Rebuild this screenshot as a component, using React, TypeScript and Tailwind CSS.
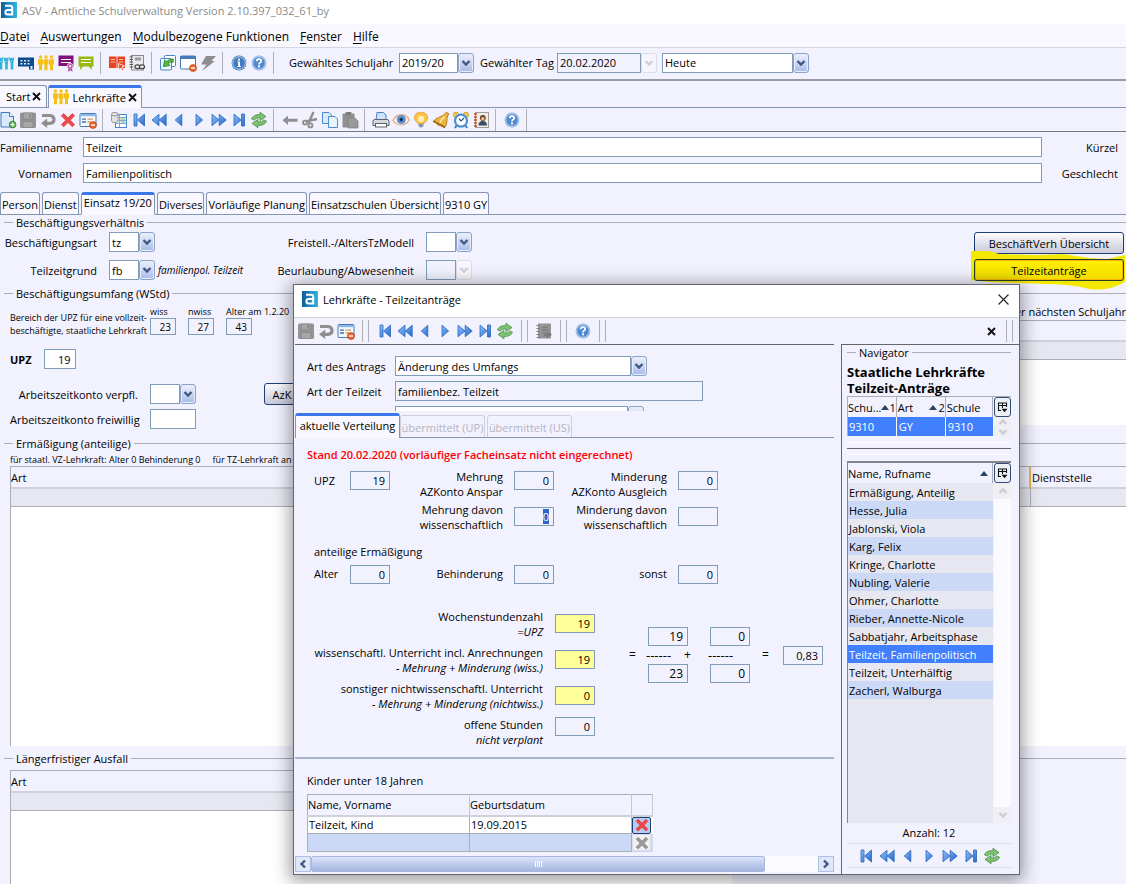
import type { ReactNode } from "react";

/* ---------- icons ---------- */

function Svg({ children, size = 18 }: { children: ReactNode; size?: number }) {
  return (
    <svg width={size} height={size} viewBox="0 0 18 18" aria-hidden="true" className="shrink-0">
      {children}
    </svg>
  );
}

const LogoIcon = () => (
  <Svg size={16}>
    <defs>
      <linearGradient id="logo" x1="0" x2="1">
        <stop offset="0" stopColor="#0f5c9c" />
        <stop offset="1" stopColor="#2fb4e6" />
      </linearGradient>
    </defs>
    <rect width="18" height="18" fill="url(#logo)" />
    <path d="M4.5 4.2 H10.5 Q12.6 4.2 12.6 6.5 V14 H7.5 Q5 14 5 11.5 Q5 9 7.5 9 H12.6" fill="none" stroke="#fff" strokeWidth="2.3" />
  </Svg>
);

const PeopleIcon = ({ color }: { color: string }) => (
  <Svg>
    <g fill={color}>
      {[3.5, 9, 14.5].map((x) => (
        <g key={x}>
          <circle cx={x} cy="3" r="1.7" />
          <path d={`M${x - 2.5} 5.2 h5 v5.4 h-1 v5.6 h-3 v-5.6 h-1 z`} />
        </g>
      ))}
    </g>
  </Svg>
);

const PupilsIcon = () => (
  <Svg>
    <g fill="#2fb2dc">
      {[3.5, 9, 14.5].map((x) => (
        <g key={x}>
          <circle cx={x} cy="5.4" r="1.6" />
          <path d={`M${x - 2.7} 3.5 h1.4 l.6 4 h1.4 l.6 -4 h1.4 l-.9 6.5 v5.5 h-2.6 v-5.5 z`} />
        </g>
      ))}
    </g>
  </Svg>
);

const SchoolIcon = () => (
  <Svg>
    <path d="M1 3.5 H17 V15.5 H12 V12.5 H1 Z" fill="#0b4a8c" />
    <path d="M3.5 6 h2 v1.5 h-2z M7 6 h2 v1.5 h-2z M10.5 6 h2 v1.5 h-2z M3.5 9 h2 v1.5 h-2z M7 9 h2 v1.5 h-2z M10.5 9 h2 v1.5 h-2z M13.5 12 h2 v3 h-2z" fill="#dfeaf6" />
  </Svg>
);

const BoardIcon = ({ color, badge }: { color: string; badge?: boolean }) => (
  <Svg>
    <path d={badge ? "M1.5 1.5 H16.5 V12 H1.5 Z" : "M1.5 2.5 H16.5 V12.5 H14.8 V16 L11.8 12.5 H6 L3.2 16 V12.5 H1.5 Z"} fill={color} />
    <path d="M4 5.5 H14 M4 8.5 H14" stroke="#fff" strokeWidth="1.1" />
    {badge && (
      <g fill="#b65aa6">
        <circle cx="13.2" cy="12.2" r="3" stroke="#fff" strokeWidth=".6" />
        <path d="M11.4 14.5 L10.8 17.8 L13.2 16.4 L15.6 17.8 L15 14.5z" />
        <circle cx="13.2" cy="12.2" r="1.1" fill="#fff" />
      </g>
    )}
  </Svg>
);

const BookIcon = () => (
  <Svg>
    <path d="M1 2.5 H8.6 V14 H1 Z M9.4 2.5 H17 V14 H9.4 Z" fill="#e8461f" />
    <path d="M2.8 5.5 H7 M2.8 8 H7 M11 5.5 H15 M11 8 H15" stroke="#f8b9a8" />
    <path d="M10.5 9.5 L16.5 12 L14 13 L16 16 L14.5 16.8 L12.8 14 L11 16 Z" fill="#e8461f" stroke="#fff" strokeWidth=".8" />
  </Svg>
);

const NotebookIcon = () => (
  <Svg>
    <rect x="3.5" y="1.5" width="12" height="14.5" fill="#e9e9ee" stroke="#8a8a8a" />
    <path d="M1.5 3 h3.5 M1.5 5.5 h3.5 M1.5 8 h3.5 M1.5 10.5 h3.5 M1.5 13 h3.5" stroke="#6a5548" strokeWidth="1.2" />
    <rect x="7" y="3.5" width="6" height="3" fill="#9a9aa4" />
    <g fill="#e9e9ee" stroke="#444" strokeWidth="1.2">
      <ellipse cx="9.5" cy="12.8" rx="2.6" ry="1.9" />
      <ellipse cx="14" cy="12.8" rx="2.6" ry="1.9" />
    </g>
  </Svg>
);

const RefreshWindowIcon = () => (
  <Svg>
    <rect x="5.5" y="1.5" width="11" height="11" rx="1" fill="#fff" stroke="#4b86c6" />
    <rect x="1.5" y="4.5" width="11" height="11.5" rx="1" fill="#f0f7ff" stroke="#4b86c6" />
    <path d="M14.2 5 Q10 4.6 7.6 7.6 L5.6 6 L4.4 12.6 L10.8 11.6 L9.2 9.6 Q10.8 7.6 14.2 8.2 Z" fill="#55bb45" stroke="#267a24" strokeWidth=".8" />
  </Svg>
);

const Minus = () => (
  <g>
    <circle cx="14" cy="14" r="3.5" fill="#ea6423" stroke="#b9400c" strokeWidth=".6" />
    <rect x="12" y="13.3" width="4" height="1.5" fill="#fff" />
  </g>
);

const CloseWindowIcon = () => (
  <Svg>
    <rect x="1.5" y="2" width="15" height="13" rx="1" fill="#fff" stroke="#4479bb" />
    <rect x="1.5" y="2" width="15" height="3" fill="#4479bb" />
    <Minus />
  </Svg>
);

const FormIcon = () => (
  <Svg>
    <rect x="1" y="2.5" width="16" height="13" rx="1" fill="#f5faff" stroke="#4479bb" />
    <rect x="1.5" y="3" width="15" height="2.2" fill="#8db7e8" />
    <path d="M3 8.2 H7 M3 11 H7" stroke="#3e70ad" strokeWidth="1.3" />
    <path d="M8.5 8.2 H14 M8.5 11 H12" stroke="#d69d56" strokeWidth="1.3" />
    <Minus />
  </Svg>
);

const BoltIcon = () => (
  <Svg>
    <path d="M7 2 H17 L12.5 7 H16 L3 17 L7.5 10.5 H2 Z" fill="#8d8d8d" />
  </Svg>
);

const RoundIcon = ({ mark }: { mark: "info" | "help" }) => (
  <Svg>
    <circle cx="9" cy="9" r="7.4" fill={mark === "info" ? "#356cae" : "#7ea9dc"} />
    <circle cx="9" cy="9" r="6.3" fill={mark === "info" ? "#3f79bf" : "#5189ce"} stroke="#cfe0f5" strokeWidth=".9" />
    {mark === "info" ? (
      <g fill="#fff">
        <circle cx="9" cy="5.7" r="1.1" />
        <path d="M7.4 7.6 H10 V12 H10.9 V13 H7.3 V12 H8.2 V8.6 H7.4 Z" />
      </g>
    ) : (
      <g>
        <path d="M6.7 7.2 Q6.8 5.2 9 5.2 Q11.2 5.2 11.2 7 Q11.2 8.2 9.9 8.8 Q9 9.2 9 10.4" fill="none" stroke="#fff" strokeWidth="1.7" />
        <circle cx="9" cy="12.4" r="1.1" fill="#fff" />
      </g>
    )}
  </Svg>
);

const NewIcon = () => (
  <Svg>
    <path d="M2 1.5 H10.5 L14.5 5.5 V16 H2 Z" fill="#d9eafc" stroke="#3b79c0" />
    <path d="M10.5 1.5 V5.5 H14.5" fill="#fff" stroke="#3b79c0" />
    <circle cx="13.6" cy="13.6" r="3.4" fill="#55b340" stroke="#2d7d26" strokeWidth=".7" />
    <path d="M13.6 11.6 V15.6 M11.6 13.6 H15.6" stroke="#fff" strokeWidth="1.3" />
  </Svg>
);

const SaveIcon = () => (
  <Svg>
    <rect x="1" y="1.5" width="16" height="15.5" rx="1.5" fill="#949494" />
    <path d="M4.5 2 H13.5 V8 H4.5 Z M4 10.5 H14 V16.5 H4 Z" fill="#a6a6a6" stroke="#858585" strokeWidth=".7" />
    <path d="M10.5 3 h1.6 v3.4 h-1.6z" fill="#858585" />
  </Svg>
);

const UndoIcon = () => (
  <Svg>
    <path d="M3 4.5 H11 Q15 5 15 8.6 Q15 12.3 11 12.4 H7" fill="none" stroke="#8f8f8f" strokeWidth="3.2" />
    <path d="M8.2 7.5 V17 L2 12.3 Z" fill="#8f8f8f" />
  </Svg>
);

const CrossIcon = ({ color = "#f04848", edge = "#d43a3a", size = 18 }: { color?: string; edge?: string; size?: number }) => (
  <Svg size={size}>
    <path d="M4.6 2.6 L9 6.8 L13.4 2.6 L15.6 4.8 L11.3 9.2 L15.6 13.6 L13.4 15.8 L9 11.5 L4.6 15.8 L2.4 13.6 L6.7 9.2 L2.4 4.8 Z" fill={color} stroke={edge} strokeWidth=".7" />
  </Svg>
);

const ListIcon = () => (
  <Svg>
    <rect x="5.5" y="3.5" width="11" height="13" fill="#fff" stroke="#4b84c4" />
    <path d="M5.5 6.5 H16.5 M5.5 9.5 H16.5 M5.5 12.5 H16.5 M9.5 3.5 V16" stroke="#7fa8d8" />
    <path d="M10.5 8 h5 M10.5 11 h5" stroke="#6bb35a" />
    <rect x="1.5" y="1.5" width="6.5" height="10" rx="2" fill="#e3e3e6" stroke="#989898" />
    <path d="M1.5 4.2 Q5 5.6 8 4.2" fill="none" stroke="#989898" />
  </Svg>
);

type NavKind = "first" | "rewind" | "prev" | "next" | "forward" | "last";
const navPaths: Record<NavKind, string> = {
  first: "M4 3 H7 V15 H4 Z M14.5 3 V15 L7.5 9 Z",
  rewind: "M9 3.2 V14.8 L2 9 Z M16.2 3.2 V14.8 L9.2 9 Z",
  prev: "M11.8 3.2 V14.8 L5.2 9 Z",
  next: "M6 3.2 V14.8 L12.6 9 Z",
  forward: "M2 3.2 V14.8 L9 9 Z M9.2 3.2 V14.8 L16.2 9 Z",
  last: "M11.5 3 H14.5 V15 H11.5 Z M4 3 V15 L11 9 Z",
};
const NavIcon = ({ kind }: { kind: NavKind }) => (
  <Svg>
    <defs>
      <linearGradient id={`nav-${kind}`} x1="0" y1="0" x2="1" y2="1">
        <stop offset="0" stopColor="#8cc0f8" />
        <stop offset="1" stopColor="#2468cf" />
      </linearGradient>
    </defs>
    <path d={navPaths[kind]} fill={`url(#nav-${kind})`} stroke="#2b66bd" strokeWidth=".8" />
  </Svg>
);

const CycleIcon = () => (
  <Svg>
    <path d="M1.5 8 Q3 3.2 10 3.6 V1.2 L16 5.6 L10 9.6 V7 Q6 6.4 4.4 9 Z" fill="#7cc272" stroke="#3f8a3c" strokeWidth=".7" />
    <path d="M16.5 10 Q15 14.8 8 14.4 V16.8 L2 12.4 L8 8.4 V11 Q12 11.6 13.6 9 Z" fill="#7cc272" stroke="#3f8a3c" strokeWidth=".7" />
  </Svg>
);

const BackIcon = () => (
  <Svg>
    <path d="M7 4.5 V7.7 H16.5 V10.7 H7 V13.9 L1.5 9.2 Z" fill="#8f8f8f" />
  </Svg>
);

const CutIcon = () => (
  <Svg>
    <path d="M12.5 1 L7.5 12 M16 8 L4.5 10.5" stroke="#8f8f8f" strokeWidth="2.4" />
    <circle cx="4" cy="11.6" r="2" fill="none" stroke="#8f8f8f" strokeWidth="1.9" />
    <circle cx="9.4" cy="14.4" r="2" fill="none" stroke="#8f8f8f" strokeWidth="1.9" />
  </Svg>
);

const CopyIcon = () => (
  <Svg>
    <path d="M1.5 1.5 H8 L10.5 4 V12.5 H1.5 Z" fill="#d9eafc" stroke="#4b8ad0" />
    <path d="M7.5 5.5 H14 L16.5 8 V16.5 H7.5 Z" fill="#e9f3fd" stroke="#4b8ad0" />
  </Svg>
);

const PasteIcon = () => (
  <Svg>
    <rect x="1.5" y="2.5" width="12" height="14" rx="1" fill="#8f8f8f" />
    <rect x="4.5" y="1" width="6" height="3" rx="1" fill="#7d7d7d" />
    <path d="M7 7 H14 L17 10 V17 H7 Z" fill="#999" stroke="#7f7f7f" strokeWidth=".7" />
  </Svg>
);

const PrintIcon = () => (
  <Svg>
    <path d="M5 1.5 H11.5 L14 4 V9 H4 Z" fill="#cfe4fa" stroke="#4b80b8" />
    <path d="M2.5 8.5 H15.5 Q17 8.5 17 10.5 V14.5 H1 V10.5 Q1 8.5 2.5 8.5 Z" fill="#d5d8de" stroke="#5b6270" />
    <rect x="3.5" y="12.5" width="11" height="3.5" fill="#fff" stroke="#5b6270" />
  </Svg>
);

const EyeIcon = () => (
  <Svg>
    <path d="M.8 9.5 Q4 3.6 9.5 3.6 Q14.8 4 17.4 9 Q14 14 8.8 14 Q4 13.6 .8 9.5 Z" fill="#fbeee6" stroke="#d9a384" strokeWidth="1.1" />
    <circle cx="9.3" cy="8.6" r="4" fill="#5a94d8" stroke="#3f6fae" strokeWidth=".6" />
    <circle cx="9.3" cy="8.6" r="1.8" fill="#12305c" />
  </Svg>
);

const BulbIcon = () => (
  <Svg>
    <path d="M9 1.2 Q15.6 1.5 15.6 7 Q15.3 10 12 12.4 H6 Q2.7 10 2.4 7 Q2.4 1.5 9 1.2 Z" fill="#fcc548" stroke="#e39a34" strokeWidth=".8" />
    <ellipse cx="9" cy="8" rx="3" ry="3.2" fill="#fff0b8" />
    <path d="M6.5 12.8 H11.5 V15 Q9 18 6.5 15 Z" fill="#8e94a0" />
  </Svg>
);

const BellIcon = () => (
  <Svg>
    <path d="M14.2 1.4 L16.8 2.6 Q14.6 6 14.9 10.2 Q15 13.6 12.6 16.6 L1.4 10.6 Q3.4 7.4 6.8 6.4 Q11.4 5 14.2 1.4 Z" fill="#eeb440" stroke="#b07818" strokeWidth=".9" />
    <path d="M1.2 10 L13 16.4" stroke="#a26a12" strokeWidth="1.8" />
    <path d="M12.6 5.6 Q9.6 8 8 11.6" fill="none" stroke="#fdeab0" strokeWidth="1.6" />
    <path d="M5 13 Q5 15.6 8.6 15 Z" fill="#b7791d" />
  </Svg>
);

const AlarmIcon = () => (
  <Svg>
    <circle cx="4" cy="3.8" r="2.7" fill="#f0c656" stroke="#bd8a24" strokeWidth=".6" />
    <circle cx="14" cy="3.8" r="2.7" fill="#f0c656" stroke="#bd8a24" strokeWidth=".6" />
    <path d="M4.5 14.5 L3 17 M13.5 14.5 L15 17" stroke="#3c76b6" strokeWidth="1.8" />
    <circle cx="9" cy="9.7" r="6" fill="#fff" stroke="#4c91d6" strokeWidth="2.2" />
    <path d="M9 10.2 L12 7 M9 10.2 L7.2 7.6" stroke="#30517c" strokeWidth="1.2" />
  </Svg>
);

const ContactsIcon = () => (
  <Svg>
    <rect x="3.5" y="1.5" width="13" height="15" fill="#f0ece8" stroke="#a39d98" />
    <path d="M2 3 h3 M2 6 h3 M2 9 h3 M2 12 h3 M2 15 h3" stroke="#c04b2c" strokeWidth="1.6" />
    <circle cx="10.8" cy="7" r="2.9" fill="#6b4423" />
    <circle cx="10.8" cy="7.8" r="1.8" fill="#efba90" />
    <path d="M6.5 14.5 Q6.5 10 10.8 10 Q15 10 15 14.5 Z" fill="#3b4d68" />
  </Svg>
);

const ExportIcon = () => (
  <Svg>
    <rect x="3" y="1.5" width="13" height="15" fill="#949494" />
    <path d="M1.5 3.5 h3 M1.5 6.5 h3 M1.5 9.5 h3 M1.5 12.5 h3 M1.5 15.5 h3" stroke="#7b7b7b" strokeWidth="1.2" />
    <path d="M7 5.5 H13 M7 8.2 H13 M7 11 H10" stroke="#7b7b7b" strokeWidth="1.2" />
    <path d="M9 11.2 H12 V9 L17 12.8 L12 16.5 V14.4 H9 Z" fill="#7c7c7c" />
  </Svg>
);

const Chevron = ({ dir = "down", color = "#41587f" }: { dir?: "down" | "up" | "left" | "right"; color?: string }) => {
  const d = {
    down: "M1.5 3 L5 6.5 L8.5 3",
    up: "M1.5 7 L5 3.5 L8.5 7",
    left: "M7 1.5 L3.5 5 L7 8.5",
    right: "M3 1.5 L6.5 5 L3 8.5",
  }[dir];
  return (
    <svg width="10" height="10" viewBox="0 0 10 10" aria-hidden="true">
      <path d={d} fill="none" stroke={color} strokeWidth="2.4" />
    </svg>
  );
};

const SortUp = () => (
  <svg width="8" height="5" viewBox="0 0 8 5" aria-hidden="true">
    <path d="M4 0 L8 5 H0 Z" fill="#28445f" />
  </svg>
);

/* ---------- controls ---------- */

function ToolButton({ label, children }: { label: string; children: ReactNode }) {
  return (
    <button type="button" aria-label={label} className="flex h-5 w-5 shrink-0 items-center justify-center">
      {children}
    </button>
  );
}

const Sep = () => <span className="mr-1.5 ml-1 h-[22px] w-px shrink-0 bg-[#b0b0b8]" />;
const DoubleSep = () => (
  <span className="flex h-[22px] w-[19px] shrink-0 justify-center gap-[5px]">
    <span className="w-px bg-[#b0b0b8]" />
    <span className="w-px bg-[#b0b0b8]" />
  </span>
);

function Combo({
  label,
  value = "",
  disabled = false,
  className = "",
}: {
  label: string;
  value?: string;
  disabled?: boolean;
  className?: string;
}) {
  return (
    <div className={`flex h-5 shrink-0 ${className}`}>
      <select
        aria-label={label}
        defaultValue={value}
        disabled={disabled}
        className="h-full min-w-0 flex-1 appearance-none border border-[#7f9db9] bg-white pl-0.5 text-black opacity-100 disabled:bg-[#f2f2ff]"
      >
        <option>{value}</option>
      </select>
      <span
        className={
          disabled
            ? "pointer-events-none flex w-4 items-center justify-center rounded-[3px] border border-[#dcdce8] bg-[#f6f6fc]"
            : "pointer-events-none flex w-4 items-center justify-center rounded-[3px] border border-[#8ba3c8] bg-linear-to-b from-[#eef1fb] to-[#a9baea] inset-ring inset-ring-[#e6ecfa]"
        }
      >
        <Chevron color={disabled ? "#d0d0dc" : "#41587f"} />
      </span>
    </div>
  );
}

function Num({ label, value, className, focus = false }: { label: string; value: string; className: string; focus?: boolean }) {
  return (
    <input
      aria-label={label}
      defaultValue={value}
      autoFocus={focus}
      onFocus={(e) => focus && e.currentTarget.select()}
      className={`border border-[#7f9db9] text-right outline-none selection:bg-[#2f66c8] selection:text-white ${className}`}
    />
  );
}

function Legend({ children }: { children: ReactNode }) {
  return (
    <div className="flex h-3.5 items-center gap-[3px]">
      <span className="h-px w-[9px] bg-[#adadb5]" />
      <span className="whitespace-nowrap">{children}</span>
      <span className="h-px flex-1 bg-[#adadb5]" />
    </div>
  );
}

function Tab({ children, active = false }: { children: ReactNode; active?: boolean }) {
  return (
    <button
      type="button"
      role="tab"
      aria-selected={active}
      className={
        active
          ? "-mb-px h-[23px] rounded-t-[3px] border border-t-[3px] border-[#8397b5] border-t-[#3b77e8] border-b-[#f8f8fe] bg-[#f8f8fe] px-0.5 pb-1 whitespace-nowrap"
          : "h-[22px] rounded-t-[3px] border border-b-0 border-[#8397b5] bg-[#f8f8fe] px-px pt-[2px] whitespace-nowrap"
      }
    >
      {children}
    </button>
  );
}

const CloseMark = () => (
  <svg width="9" height="9" viewBox="0 0 9 9" aria-hidden="true">
    <path d="M1 1 L8 8 M8 1 L1 8" stroke="#111" strokeWidth="1.9" />
  </svg>
);

const NavButtons = () => (
  <>
    <ToolButton label="Erster"><NavIcon kind="first" /></ToolButton>
    <ToolButton label="Schnell zurück"><NavIcon kind="rewind" /></ToolButton>
    <ToolButton label="Zurück"><NavIcon kind="prev" /></ToolButton>
    <ToolButton label="Weiter"><NavIcon kind="next" /></ToolButton>
    <ToolButton label="Schnell weiter"><NavIcon kind="forward" /></ToolButton>
    <ToolButton label="Letzter"><NavIcon kind="last" /></ToolButton>
    <ToolButton label="Aktualisieren"><CycleIcon /></ToolButton>
  </>
);

const ColumnButton = () => (
  <button type="button" aria-label="Spalten" className="flex h-5 w-[17px] shrink-0 items-center justify-center rounded-[3px] border border-[#2f4d78] bg-[#eef0f8]">
    <svg width="11" height="11" viewBox="0 0 11 11" aria-hidden="true">
      <path d="M4 8.5 H1.5 V1 H9.5 V5 M1.5 3.5 H9.5 M5.5 1 V6" fill="none" stroke="#111" strokeWidth="1.1" />
      <path d="M4.5 6.8 H10.5 L7.5 10.3 Z" fill="#111" />
    </svg>
  </button>
);

/* ---------- main window ---------- */

const menu = ["Datei", "Auswertungen", "Modulbezogene Funktionen", "Fenster", "Hilfe"];

function MainHeader() {
  return (
    <header>
      <div className="flex h-6 items-center gap-[5px] bg-white pb-1 pl-px text-[11px] text-[#8a8a8a]">
        <LogoIcon />
        <span>ASV - Amtliche Schulverwaltung Version 2.10.397_032_61_by</span>
      </div>
      <nav className="flex h-6 items-center gap-[11px] border-b border-[#d5d5e2] bg-[#f8f8fe] pt-[3px] text-xs">
        {menu.map((m) => (
          <button type="button" key={m} className="whitespace-nowrap">
            <span className="underline underline-offset-2">{m[0]}</span>
            {m.slice(1)}
          </button>
        ))}
      </nav>
      <div className="flex h-[33px] items-center border-b-2 border-[#9a9aa2] pb-0.5">
        <div className="-ml-1 flex items-center">
          <ToolButton label="Schüler"><PupilsIcon /></ToolButton>
          <ToolButton label="Schule"><SchoolIcon /></ToolButton>
          <ToolButton label="Lehrkräfte"><PeopleIcon color="#f6c015" /></ToolButton>
          <ToolButton label="Zeugnisse"><BoardIcon color="#82107c" badge /></ToolButton>
          <ToolButton label="Unterricht"><BoardIcon color="#97ba12" /></ToolButton>
          <Sep />
          <ToolButton label="Verzeichnis"><BookIcon /></ToolButton>
          <ToolButton label="Notizen"><NotebookIcon /></ToolButton>
          <Sep />
          <ToolButton label="Fenster aktualisieren"><RefreshWindowIcon /></ToolButton>
          <ToolButton label="Fenster schließen"><CloseWindowIcon /></ToolButton>
          <ToolButton label="Schnellzugriff"><BoltIcon /></ToolButton>
          <Sep />
          <ToolButton label="Info"><RoundIcon mark="info" /></ToolButton>
          <ToolButton label="Hilfe"><RoundIcon mark="help" /></ToolButton>
          <Sep />
        </div>
        <span className="ml-[9px] w-[110px] whitespace-nowrap">Gewähltes Schuljahr</span>
        <Combo label="Gewähltes Schuljahr" value="2019/20" className="w-[75px]" />
        <span className="ml-1.5 w-[77px] whitespace-nowrap">Gewählter Tag</span>
        <Combo label="Gewählter Tag" value="20.02.2020" disabled className="w-[100px]" />
        <Combo label="Zeitpunkt" value="Heute" className="ml-[5px] w-[147px]" />
      </div>
    </header>
  );
}

function ModuleBar() {
  return (
    <>
      <div role="tablist" className="mt-1 flex h-[23px] items-end gap-px border-b border-[#8397b5]">
        <div className="flex h-[22px] items-center gap-0.5 rounded-tr-[3px] border border-b-0 border-l-0 border-[#8397b5] bg-[#f8f8fe] pr-[5px] pl-1.5">
          <button type="button" role="tab">Start</button>
          <button type="button" aria-label="Start schließen"><CloseMark /></button>
        </div>
        <div className="-mb-px flex h-[23px] items-center gap-0.5 rounded-t-[3px] border border-t-[3px] border-b-0 border-[#8397b5] border-t-[#3b77e8] bg-[#f8f8fe] pr-1 pb-0.5 pl-[3px]">
          <PeopleIcon color="#f6c015" />
          <button type="button" role="tab">Lehrkräfte</button>
          <button type="button" aria-label="Lehrkräfte schließen"><CloseMark /></button>
        </div>
      </div>
      <div className="flex h-6 items-center border-b border-[#77777f]">
        <div className="-ml-0.5 flex items-center">
          <ToolButton label="Neu"><NewIcon /></ToolButton>
          <ToolButton label="Speichern"><SaveIcon /></ToolButton>
          <ToolButton label="Rückgängig"><UndoIcon /></ToolButton>
          <ToolButton label="Löschen"><CrossIcon /></ToolButton>
          <ToolButton label="Formular"><FormIcon /></ToolButton>
          <Sep />
          <ToolButton label="Liste"><ListIcon /></ToolButton>
          <NavButtons />
          <Sep />
          <ToolButton label="Zurückgehen"><BackIcon /></ToolButton>
          <ToolButton label="Ausschneiden"><CutIcon /></ToolButton>
          <ToolButton label="Kopieren"><CopyIcon /></ToolButton>
          <ToolButton label="Einfügen"><PasteIcon /></ToolButton>
          <Sep />
          <ToolButton label="Drucken"><PrintIcon /></ToolButton>
          <ToolButton label="Vorschau"><EyeIcon /></ToolButton>
          <ToolButton label="Hinweis"><BulbIcon /></ToolButton>
          <ToolButton label="Meldung"><BellIcon /></ToolButton>
          <ToolButton label="Termin"><AlarmIcon /></ToolButton>
          <ToolButton label="Kontakte"><ContactsIcon /></ToolButton>
          <Sep />
          <ToolButton label="Hilfe"><RoundIcon mark="help" /></ToolButton>
          <Sep />
        </div>
      </div>
    </>
  );
}

function EmploymentSection() {
  return (
    <section className="pl-1">
      <div className="h-[13px]">
        <Legend>Beschäftigungsverhältnis</Legend>
      </div>
      <div className="mt-1 flex items-start justify-between pr-0.5 pb-[5px]">
        <div className="flex flex-col gap-2">
          <div className="flex items-center">
            <span className="w-[93px] text-right">Beschäftigungsart</span>
            <Combo label="Beschäftigungsart" value="tz" className="ml-3 w-[46px]" />
            <span className="w-[259px] text-right">Freistell.-/AltersTzModell</span>
            <Combo label="Freistellungsmodell" className="ml-3 w-[46px]" />
          </div>
          <div className="flex items-center">
            <span className="w-[93px] text-right">Teilzeitgrund</span>
            <Combo label="Teilzeitgrund" value="fb" className="ml-3 w-[46px]" />
            <span className="flex w-[259px] items-center justify-between pl-[3px]">
              <i className="text-[10px]">familienpol. Teilzeit</i>
              <span>Beurlaubung/Abwesenheit</span>
            </span>
            <Combo label="Beurlaubung" disabled className="ml-3 w-[46px]" />
          </div>
        </div>
        <div className="flex w-[150px] flex-col gap-[5px]">
          <button type="button" className="h-[22px] rounded-[3px] border border-[#1f3f74] bg-linear-to-b from-[#fbfbfe] to-[#c9c9da]">
            BeschäftVerh Übersicht
          </button>
          <div className="relative">
            <svg width="154" height="40" viewBox="0 0 154 40" preserveAspectRatio="none" className="absolute -top-2 -left-[3px]" aria-hidden="true">
              <path
                d="M0 0 L18 0 L28 3 L68 4 L92 3 L118 7 L136 8 L154 4 V31 L148 34 Q134 40 118 38 Q100 33 75 33 L18 31 L0 29 Z"
                fill="#f4e800"
              />
            </svg>
            <button type="button" className="relative h-[22px] w-full rounded-[3px] border border-[#24402a] bg-linear-to-b from-[#fff000] to-[#f2dc00] inset-ring inset-ring-[#f8b400]">
              Teilzeitanträge
            </button>
          </div>
        </div>
      </div>
    </section>
  );
}

const range: [string, string][] = [
  ["wiss", "23"],
  ["nwiss", "27"],
  ["Alter am 1.2.20", "43"],
];

function ScopeSection() {
  return (
    <section className="h-[150px] pl-1">
      <Legend>Beschäftigungsumfang (WStd)</Legend>
      <div className="flex">
        <div className="w-[290px] shrink-0 pl-1.5">
          <div className="flex pt-[5px] text-[9px] leading-[13px]">
            <p className="w-[140px] shrink-0 pt-1.5 whitespace-nowrap">
              Bereich der UPZ für eine vollzeit-
              <br />
              beschäftigte, staatliche Lehrkraft
            </p>
            {range.map(([label, value]) => (
              <label key={label} className="w-[38px] shrink-0 whitespace-nowrap">
                {label}
                <Num label={label} value={value} className="block h-[17px] w-[26px] pr-1 text-[10px]" />
              </label>
            ))}
          </div>
          <label className="mt-3 flex items-center gap-3 font-bold">
            UPZ
            <Num label="UPZ" value="19" className="h-5 w-8 bg-white pr-1 font-normal" />
          </label>
          <div className="mt-3.5 flex items-center">
            <span className="w-32 shrink-0 text-right whitespace-nowrap">Arbeitszeitkonto verpfl.</span>
            <Combo label="Arbeitszeitkonto verpfl." className="ml-3 w-[46px]" />
            <button type="button" className="ml-[68px] h-[22px] w-12 shrink-0 rounded-[3px] border border-[#1f3f74] bg-linear-to-b from-[#fbfbfe] to-[#c9c9da] pr-3">
              AzK
            </button>
          </div>
          <label className="mt-1 flex items-center">
            <span className="w-32 shrink-0 text-right whitespace-nowrap">Arbeitszeitkonto freiwillig</span>
            <Num label="Arbeitszeitkonto freiwillig" value="" className="ml-3 h-5 w-[46px] bg-white" />
          </label>
        </div>
        <div className="flex-1">
          <p className="h-5 pt-1 text-right leading-4">er nächsten Schuljahr</p>
          <div className="h-[22px] border-t border-b-2 border-[#adadb5] border-b-[#d0d0da]" />
          <div className="h-[18px] border-b border-[#adadb5] bg-[#e7e7f1]" />
          <div className="h-[65px] bg-white" />
        </div>
      </div>
    </section>
  );
}

function EmptyTable({ columns, className }: { columns: string[]; className: string }) {
  return (
    <div className={`ml-2.5 flex flex-col border-t border-l border-[#adadb5] bg-white ${className}`}>
      <table className="w-full border-collapse">
        <thead>
          <tr className="h-[21px] border-b-2 border-[#d0d0da] bg-[#f2f2ff]">
            {columns.map((c, i) => (
              <th key={c} className={i ? "w-[96px] border-l-2 border-l-[#e8b45a] pl-px text-left font-normal" : "text-left font-normal"}>
                {c}
              </th>
            ))}
          </tr>
        </thead>
        <tbody>
          <tr className="h-[18px] border-b border-[#adadb5] bg-[#e7e7f1]">
            {columns.map((c, i) => (
              <td key={c} className={i ? "border-l border-[#adadb5]" : ""} />
            ))}
          </tr>
        </tbody>
      </table>
    </div>
  );
}

/* ---------- dialog ---------- */

const people = [
  "Ermäßigung, Anteilig",
  "Hesse, Julia",
  "Jablonski, Viola",
  "Karg, Felix",
  "Kringe, Charlotte",
  "Nubling, Valerie",
  "Ohmer, Charlotte",
  "Rieber, Annette-Nicole",
  "Sabbatjahr, Arbeitsphase",
  "Teilzeit, Familienpolitisch",
  "Teilzeit, Unterhälftig",
  "Zacherl, Walburga",
];
const selectedPerson = "Teilzeit, Familienpolitisch";

const hours: [string, string, string, boolean][] = [
  ["Wochenstundenzahl", "=UPZ", "19", true],
  ["wissenschaftl. Unterricht incl. Anrechnungen", "- Mehrung + Minderung (wiss.)", "19", true],
  ["sonstiger nichtwissenschaftl. Unterricht", "- Mehrung + Minderung (nichtwiss.)", "0", true],
  ["offene Stunden", "nicht verplant", "0", false],
];

const box = "h-[19px] w-10 pr-1";

function Fraction({ top, bottom }: { top: string; bottom: string }) {
  return (
    <div className="w-10">
      <Num label="Zähler" value={top} className={box} />
      <div className="-ml-0.5 h-[18px] text-[13px] leading-[18px] whitespace-nowrap">------</div>
      <Num label="Nenner" value={bottom} className={box} />
    </div>
  );
}

function Distribution() {
  return (
    <div className="h-[321px] border-b-2 border-[#a5b3cc] pt-[9px] pl-[19px]">
      <p className="-ml-[7px] leading-4 font-semibold text-[#ff0000]">Stand 20.02.2020 (vorläufiger Facheinsatz nicht eingerechnet)</p>
      <div className="mt-1.5 grid grid-cols-[36px_40px_124px_40px_124px_40px] gap-y-[3px] leading-[15px] [&>p]:pr-[11px] [&>p]:text-right">
        <span className="pt-1">UPZ</span>
        <Num label="UPZ" value="19" className={`${box} mt-0.5`} />
        <p>Mehrung<br />AZKonto Anspar</p>
        <Num label="Mehrung AZKonto" value="0" className={`${box} mt-0.5`} />
        <p>Minderung<br />AZKonto Ausgleich</p>
        <Num label="Minderung AZKonto" value="0" className={`${box} mt-0.5`} />
        <span />
        <span />
        <p>Mehrung davon<br />wissenschaftlich</p>
        <Num label="Mehrung davon wissenschaftlich" value="0" focus className={`${box} mt-[5px]`} />
        <p>Minderung davon<br />wissenschaftlich</p>
        <Num label="Minderung davon wissenschaftlich" value="" className={`${box} mt-[5px]`} />
      </div>
      <p className="mt-3 leading-[15px]">anteilige Ermäßigung</p>
      <div className="mt-1.5 grid grid-cols-[36px_40px_124px_40px_124px_40px] leading-[17px] [&>p]:pr-[11px] [&>p]:text-right">
        <span>Alter</span>
        <Num label="Ermäßigung Alter" value="0" className={box} />
        <p>Behinderung</p>
        <Num label="Ermäßigung Behinderung" value="0" className={box} />
        <p>sonst</p>
        <Num label="Ermäßigung sonst" value="0" className={box} />
      </div>
      <div className="mt-[25px] flex">
        <div className="grid grid-cols-[229px_40px] gap-x-3 gap-y-1.5 leading-[15px]">
          {hours.map(([title, note, value, yellow]) => (
            <div key={title} className="contents">
              <p className="text-right whitespace-nowrap">
                {title}
                <br />
                <i>{note}</i>
              </p>
              <Num label={title} value={value} className={yellow ? `${box} mt-[5px] bg-[#ffff99]` : `${box} self-start`} />
            </div>
          ))}
        </div>
        <div className="ml-[34px] flex h-[92px] items-center text-xs">
          <span className="w-[19px]">=</span>
          <Fraction top="19" bottom="23" />
          <span className="-ml-1 w-[26px]">+</span>
          <Fraction top="0" bottom="0" />
          <span className="w-[33px] pl-3">=</span>
          <Num label="Ergebnis" value="0,83" className={`${box} text-[11px]`} />
        </div>
      </div>
    </div>
  );
}

function ScrollColumn() {
  return (
    <div className="flex flex-1 flex-col justify-between bg-[#fbfbff]">
      <span className="flex h-4 items-center justify-center bg-[#f0f0f4]"><Chevron dir="up" color="#cbcbd4" /></span>
      <span className="flex h-4 items-center justify-center bg-[#f0f0f4]"><Chevron color="#cbcbd4" /></span>
    </div>
  );
}

function Navigator() {
  return (
    <aside className="flex w-[178px] shrink-0 flex-col border-t border-l border-[#66666e] pr-2 pl-[5px]">
      <Legend>Navigator</Legend>
      <h2 className="mt-[5px] text-[13px] leading-4 font-bold">
        Staatliche Lehrkräfte
        <br />
        Teilzeit-Anträge
      </h2>
      <div className="flex h-10 border-t border-l border-[#adadb5]">
        <table className="flex-1 table-fixed border-collapse">
          <thead>
            <tr className="h-5">
              <th className="w-12 border-r border-[#adadb5] font-normal">
                <span className="flex items-center justify-between"><span>Schu...</span><SortUp /><span>1</span></span>
              </th>
              <th className="w-[49px] border-r border-[#adadb5] pl-px font-normal">
                <span className="flex items-center"><span className="flex-1 text-left">Art</span><SortUp /><span className="pl-px">2</span></span>
              </th>
              <th className="border-r border-[#adadb5] pl-px text-left font-normal">Schule</th>
            </tr>
          </thead>
          <tbody>
            <tr className="h-[18px] bg-[#4080ff] text-white">
              <td className="border-r border-white pl-px">9310</td>
              <td className="border-r border-white pl-0.5">GY</td>
              <td className="pl-0.5">9310</td>
            </tr>
          </tbody>
        </table>
        <div className="flex w-[18px] flex-col pl-px">
          <ColumnButton />
          <span className="flex flex-col items-center bg-[#f0f0f4]"><Chevron dir="up" color="#cbcbd4" /><Chevron color="#cbcbd4" /></span>
        </div>
      </div>
      <div className="mt-1.5 h-[13px] border-y border-white">
        <div className="mt-[5px] h-px bg-[#66666e]" />
      </div>
      <div className="mt-1.5 flex min-h-0 flex-1 border-t-2 border-l border-[#85858d]">
        <div className="flex-1 bg-[#e7e7f1]">
          <table className="w-full border-collapse">
            <thead>
              <tr className="h-5 bg-[#f2f2ff]">
                <th className="border-r border-[#adadb5] pr-1 font-normal">
                  <span className="flex items-center justify-between">Name, Rufname<SortUp /></span>
                </th>
              </tr>
            </thead>
            <tbody>
              {people.map((p) => (
                <tr key={p} className={p === selectedPerson ? "h-[18px] bg-[#4080ff] text-white" : "h-[18px] even:bg-[#ccd9f6]"}>
                  <td className="pl-px">{p}</td>
                </tr>
              ))}
            </tbody>
          </table>
        </div>
        <div className="flex w-[18px] flex-col pl-px">
          <ColumnButton />
          <ScrollColumn />
        </div>
      </div>
      <p className="h-5 text-center leading-5">Anzahl: 12</p>
      <div className="mb-1.5 flex h-[25px] items-center justify-center gap-px border-y border-[#dcdce8]">
        <NavButtons />
      </div>
    </aside>
  );
}

function Children() {
  return (
    <div className="pt-[14px] pl-3">
      <p className="leading-4">Kinder unter 18 Jahren</p>
      <table className="mt-[5px] w-[346px] table-fixed border-collapse border-t border-l border-[#adadb5]">
        <thead>
          <tr className="h-[21px] border-b-2 border-[#d0d0da] text-left">
            <th className="w-[162px] border-r border-[#c6c6d0] font-normal">Name, Vorname</th>
            <th className="w-[162px] border-r border-[#c6c6d0] font-normal">Geburtsdatum</th>
            <th className="border-r border-[#c6c6d0]" />
          </tr>
        </thead>
        <tbody>
          <tr className="h-[18px] bg-white">
            <td className="border border-[#adadb5] pl-px">Teilzeit, Kind</td>
            <td className="border border-[#adadb5] pl-px">19.09.2015</td>
            <td>
              <button type="button" aria-label="Teilzeit, Kind löschen" className="flex h-[17px] w-[19px] items-center justify-center rounded-[2px] border border-[#1f3f74] bg-[#b9cbf0]">
                <CrossIcon size={16} />
              </button>
            </td>
          </tr>
          <tr className="h-[18px] bg-[#ccd9f6]">
            <td className="border border-[#adadb5]" />
            <td className="border border-[#adadb5]" />
            <td>
              <button type="button" aria-label="Zeile löschen" className="flex h-[17px] w-[19px] items-center justify-center border border-[#dcdce4] bg-[#f0f0f4]">
                <CrossIcon size={16} color="#999" edge="#888" />
              </button>
            </td>
          </tr>
        </tbody>
      </table>
    </div>
  );
}

function Dialog() {
  return (
    <div
      role="dialog"
      aria-label="Lehrkräfte - Teilzeitanträge"
      className="absolute top-[284px] left-[293px] flex h-[591px] w-[727px] flex-col border border-[#66666e] bg-[#f2f2ff] shadow-[0_3px_16px_3px_rgba(0,0,0,0.38)]"
    >
      <div className="flex h-[33px] items-center gap-[5px] border-b border-[#d5d5e2] bg-white pr-2.5 pb-1 pl-2 text-[11px]">
        <LogoIcon />
        <span className="flex-1">Lehrkräfte - Teilzeitanträge</span>
        <button type="button" aria-label="Schließen">
          <svg width="11" height="11" viewBox="0 0 11 11" aria-hidden="true">
            <path d="M.5 .5 L10.5 10.5 M10.5 .5 L.5 10.5" stroke="#222" strokeWidth="1.1" />
          </svg>
        </button>
      </div>
      <div className="flex h-[26px] items-center pl-0.5">
        <ToolButton label="Speichern"><SaveIcon /></ToolButton>
        <ToolButton label="Rückgängig"><UndoIcon /></ToolButton>
        <ToolButton label="Formular"><FormIcon /></ToolButton>
        <DoubleSep />
        <NavButtons />
        <DoubleSep />
        <ToolButton label="Export"><ExportIcon /></ToolButton>
        <DoubleSep />
        <ToolButton label="Hilfe"><RoundIcon mark="help" /></ToolButton>
        <DoubleSep />
        <button type="button" aria-label="Maske schließen" className="mr-1 ml-auto"><CloseMark /></button>
        <DoubleSep />
      </div>
      <div className="flex min-h-0 flex-1 pl-px">
        <div className="mr-[7px] flex min-w-0 flex-1 flex-col border-t border-[#66666e]">
          <div className="flex h-[68px] flex-col gap-[5px] overflow-hidden pt-[11px] pl-3">
            <div className="flex items-center">
              <span className="w-[88px] whitespace-nowrap">Art des Antrags</span>
              <Combo label="Art des Antrags" value="Änderung des Umfangs" className="w-[252px]" />
            </div>
            <label className="flex items-center">
              <span className="w-[88px] whitespace-nowrap">Art der Teilzeit</span>
              <input defaultValue="familienbez. Teilzeit" className="h-5 w-[308px] border border-[#7f9db9] pl-0.5" />
            </label>
            <div className="ml-[88px] h-[5px] w-[249px] overflow-hidden">
              <Combo label="Weitere Angabe" />
            </div>
          </div>
          <div role="tablist" className="flex h-[25px] items-end gap-[2px] border-b border-[#8397b5]">
            <button type="button" role="tab" aria-selected="true" className="-mb-px h-[25px] w-[105px] rounded-t-[3px] border border-t-[3px] border-b-0 border-[#8397b5] border-t-[#3b77e8] bg-[#f8f8fe] pb-1 whitespace-nowrap">
              aktuelle Verteilung
            </button>
            <button type="button" role="tab" disabled className="-ml-0.5 h-[22px] w-[85px] rounded-t-[3px] border border-b-0 border-[#d0d0dc] pt-0.5 whitespace-nowrap text-[#b4b4be]">
              übermittelt (UP)
            </button>
            <button type="button" role="tab" disabled className="h-[22px] w-[85px] rounded-t-[3px] border border-b-0 border-[#d0d0dc] pt-0.5 whitespace-nowrap text-[#b4b4be]">
              übermittelt (US)
            </button>
          </div>
          <Distribution />
          <Children />
          <div className="mt-auto mb-0.5 flex h-4 items-stretch bg-[#fcfcff]">
            <button type="button" aria-label="Nach links" className="flex w-4 items-center justify-center border border-[#b0bfe4] bg-[#dfe6f8]"><Chevron dir="left" /></button>
            <div className="flex w-[454px] items-center justify-center gap-px rounded-[2px] border border-[#a9b8de] bg-linear-to-b from-[#dbe4fa] to-[#a5b5e0]">
              <span className="h-1.5 w-px bg-white" />
              <span className="h-1.5 w-px bg-white" />
              <span className="h-1.5 w-px bg-white" />
              <span className="h-1.5 w-px bg-white" />
            </div>
            <button type="button" aria-label="Nach rechts" className="ml-auto flex w-4 items-center justify-center border border-[#b0bfe4] bg-[#dfe6f8]"><Chevron dir="right" /></button>
          </div>
        </div>
        <Navigator />
      </div>
    </div>
  );
}

/* ---------- page ---------- */

export default function App() {
  return (
    <main className="relative min-h-screen overflow-hidden bg-white pr-[5px] font-['Open_Sans','Noto_Sans',sans-serif] text-[11px] leading-[15px] text-black">
      <div className="flex min-h-screen flex-col bg-[#f2f2ff]">
        <MainHeader />
        <ModuleBar />
        <div className="mt-[5px] flex flex-col gap-1.5">
          <div className="flex items-center">
            <label htmlFor="familienname" className="w-[83px] pr-[11px] text-right">Familienname</label>
            <input id="familienname" defaultValue="Teilzeit" className="h-5 min-w-0 flex-1 border border-[#7f9db9] bg-white pl-0.5" />
            <span className="w-[84px] pr-2 text-right">Kürzel</span>
          </div>
          <div className="flex items-center">
            <label htmlFor="vornamen" className="w-[83px] pr-[11px] text-right">Vornamen</label>
            <input id="vornamen" defaultValue="Familienpolitisch" className="h-5 min-w-0 flex-1 border border-[#7f9db9] bg-white pl-0.5" />
            <span className="w-[84px] pr-2 text-right">Geschlecht</span>
          </div>
        </div>
        <div role="tablist" className="mt-[9px] flex h-[23px] items-end gap-[2px] border-b border-[#8397b5]">
          <Tab>Person</Tab>
          <Tab>Dienst</Tab>
          <Tab active>Einsatz 19/20</Tab>
          <Tab>Diverses</Tab>
          <Tab>Vorläufige Planung</Tab>
          <Tab>Einsatzschulen Übersicht</Tab>
          <Tab>9310 GY</Tab>
        </div>
        <EmploymentSection />
        <ScopeSection />
        <section>
          <div className="pl-1"><Legend>Ermäßigung (anteilige)</Legend></div>
          <p className="ml-2.5 flex h-4 w-[282px] items-end gap-3 overflow-hidden text-[9px] leading-3 whitespace-nowrap">
            <span>für staatl. VZ-Lehrkraft: Alter 0 Behinderung 0</span>
            <span>für TZ-Lehrkraft anteili</span>
          </p>
          <EmptyTable columns={["Art", "Dienststelle"]} className="h-[280px]" />
        </section>
        <section className="flex flex-1 flex-col pt-[5px]">
          <div className="pl-1"><Legend>Längerfristiger Ausfall</Legend></div>
          <EmptyTable columns={["Art"]} className="mt-[5px] w-[722px] flex-1" />
        </section>
      </div>
      <Dialog />
    </main>
  );
}
